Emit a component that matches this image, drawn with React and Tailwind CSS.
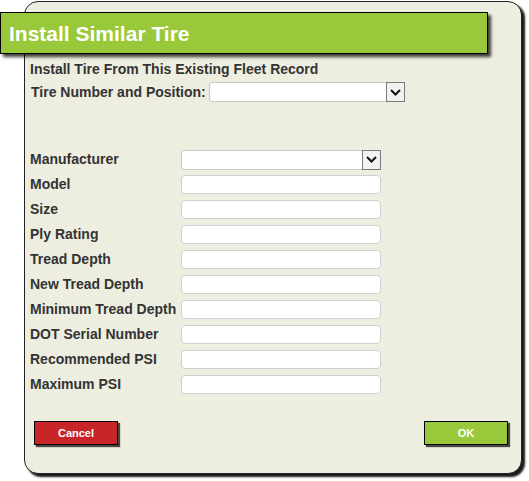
import React from "react"

const fields = [
  "Model",
  "Size",
  "Ply Rating",
  "Tread Depth",
  "New Tread Depth",
  "Minimum Tread Depth",
  "DOT Serial Number",
  "Recommended PSI",
  "Maximum PSI",
]

const Chevron = () => (
  <svg width="11" height="7" viewBox="0 0 11 7" fill="none">
    <path d="M1 1l4.5 4.5L10 1" stroke="#111" strokeWidth="2" />
  </svg>
)

const SelectBox = ({ className = "" }) => (
  <div className={`h-[20px] flex bg-white border border-[#c8c8c8] rounded-[3px] ${className}`}>
    <div className="flex-1" />
    <div className="w-[19px] -my-[1px] -mr-[1px] border border-[#7a7a7a] bg-[#f2f2f2] flex items-center justify-center">
      <Chevron />
    </div>
  </div>
)

export default function App() {
  return (
    <div className="w-[529px] h-[481px] bg-white overflow-hidden" style={{ fontFamily: '"Liberation Sans", Arial, sans-serif' }}>
      <div className="ml-[24px] mt-[1px] w-[498px] h-[473px] rounded-[14px] border border-[#222] bg-[#eeeee0] shadow-[3px_3px_2px_rgba(0,0,0,0.9)] flex flex-col">
        <div className="mt-[10px] -ml-[25px] w-[488px] h-[42px] bg-[#99c93b] border border-black shadow-[3px_3px_3px_rgba(0,0,0,0.75)] flex items-center pl-[8px]">
          <span className="text-white font-bold text-[21px] leading-none">Install Similar Tire</span>
        </div>

        <div className="pl-[5px] text-[#333] font-bold text-[14px]">
          <div className="mt-[7px] h-[16px] leading-[16px]">Install Tire From This Existing Fleet Record</div>
          <div className="mt-[5px] flex items-center h-[20px]">
            <span className="ml-[1px] w-[178px] whitespace-nowrap">Tire Number and Position:</span>
            <SelectBox className="w-[196px]" />
          </div>

          <div className="mt-[48px] flex items-center h-[19px]">
            <span className="w-[151px]">Manufacturer</span>
            <SelectBox className="w-[200px]" />
          </div>
          {fields.map((f) => (
            <div key={f} className="mt-[6px] flex items-center h-[19px]">
              <span className="w-[151px] whitespace-nowrap">{f}</span>
              <div className="w-[200px] h-[19px] bg-white border border-[#cfcfcf] rounded-[4px]" />
            </div>
          ))}
        </div>

        <div className="mt-[27px] flex justify-between pl-[9px] pr-[13px]">
          <button className="w-[84px] h-[24px] bg-[#c82528] border border-black shadow-[2px_2px_1px_rgba(0,0,0,0.7)] text-white font-bold text-[11px]">
            Cancel
          </button>
          <button className="w-[84px] h-[24px] bg-[#99c93b] border border-black shadow-[2px_2px_1px_rgba(0,0,0,0.7)] text-white font-bold text-[11px]">
            OK
          </button>
        </div>
      </div>
    </div>
  )
}
